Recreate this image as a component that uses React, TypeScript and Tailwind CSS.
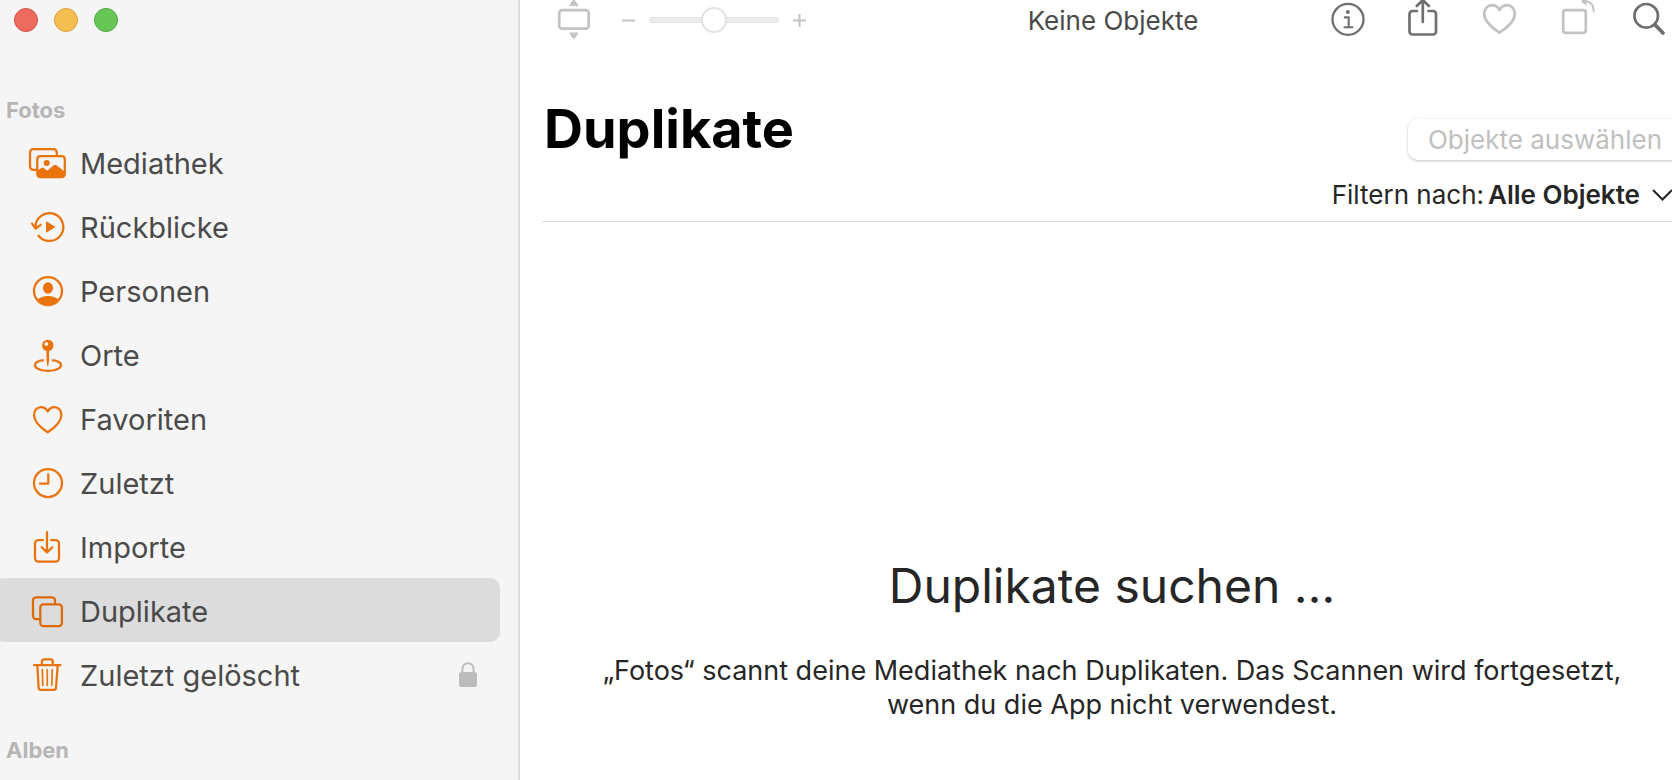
import type { ReactNode } from 'react';

type Item = { label: string; icon: ReactNode; active?: boolean; locked?: boolean };

function SideIcon({ children }: { children: ReactNode }) {
  return (
    <svg
      viewBox="0 0 40 40"
      className="size-10 shrink-0"
      fill="none"
      stroke="currentColor"
      strokeWidth="2.250"
      strokeLinecap="round"
      strokeLinejoin="round"
      aria-hidden="true"
    >
      {children}
    </svg>
  );
}

const items: Item[] = [
  {
    label: 'Mediathek',
    icon: (
      <SideIcon>
        <path d="M8 27.8H5.2A3.2 3.2 0 0 1 2 24.600V10.400A3.200 3.200 0 0 1 5.200 7.200H25.600A3.200 3.200 0 0 1 28.800 10.400V13" />
        <rect x="9.300" y="14" width="27.500" height="21" rx="3" />
        <circle cx="18.700" cy="21" r="3" fill="currentColor" stroke="none" />
        <path d="M9.300 28.700L13.500 25.900Q14.700 25.200 15.800 26.100L19 28.700L25.800 23.300Q27.200 22.300 28.500 23.300L36.800 29.700V32.500Q36.800 35 34 35H12Q9.300 35 9.300 32Z" fill="currentColor" stroke="none" />
      </SideIcon>
    ),
  },
  {
    label: 'Rückblicke',
    icon: (
      <SideIcon>
        <path d="M7.500 21.500A13.900 13.900 0 1 1 10.500 29.700" />
        <path d="M4 17.600L7.800 22.600L12.600 18.800" />
        <path d="M18 16.300Q18 15.200 19 15.800L26.800 20.400Q27.700 21 26.800 21.600L19 26.200Q18 26.800 18 25.700Z" fill="currentColor" stroke="none" />
      </SideIcon>
    ),
  },
  {
    label: 'Personen',
    icon: (
      <SideIcon>
        <circle cx="20" cy="21" r="14" />
        <ellipse cx="20" cy="18" rx="5.100" ry="5.700" fill="currentColor" stroke="none" />
        <path d="M9.600 30C11.500 27.600 15.500 26 20 26S28.500 27.600 30.400 30A14 14 0 0 1 9.600 30Z" fill="currentColor" stroke="none" />
      </SideIcon>
    ),
  },
  {
    label: 'Orte',
    icon: (
      <SideIcon>
        <path
          d="M19.800 5.700A5.700 5.700 0 1 0 19.800 17.100A5.700 5.700 0 1 0 19.800 5.700ZM18.300 8A1.900 1.900 0 1 1 18.300 11.800A1.900 1.900 0 1 1 18.300 8Z"
          fill="currentColor"
          fillRule="evenodd"
          stroke="none"
        />
        <path d="M18.500 16H21.100V26.500L20.200 32Q19.800 33 19.400 32L18.500 26.500Z" fill="currentColor" stroke="none" />
        <path d="M15.800 26.200C10.500 26.700 7 28.700 7 31.300C7 34.500 12.800 36.900 20 36.900S33 34.500 33 31.300C33 28.700 29 26.700 23.800 26.200" strokeLinecap="butt" />
      </SideIcon>
    ),
  },
  {
    label: 'Favoriten',
    icon: (
      <SideIcon>
        <path d="M19.700 34.200C13 29.800 6 23.600 6 16.900C6 12.300 9.100 9 13 9C15.900 9 18.200 10.500 19.700 13.400C21.200 10.500 23.500 9 26.400 9C30.300 9 33.400 12.300 33.400 16.900C33.400 23.600 26.400 29.800 19.700 34.200Z" />
      </SideIcon>
    ),
  },
  {
    label: 'Zuletzt',
    icon: (
      <SideIcon>
        <circle cx="20" cy="21" r="14" />
        <path d="M20.300 12.300V21.500H12" />
      </SideIcon>
    ),
  },
  {
    label: 'Importe',
    icon: (
      <SideIcon>
        <path d="M15 14H10.500A3.500 3.500 0 0 0 7 17.500V32.200A3.500 3.500 0 0 0 10.500 35.700H27.500A3.500 3.500 0 0 0 31 32.200V17.500A3.500 3.500 0 0 0 27.500 14H23" />
        <path d="M19 6V26M13.700 21.200L19 26.400L24.300 21.200" />
      </SideIcon>
    ),
  },
  {
    label: 'Duplikate',
    active: true,
    icon: (
      <SideIcon>
        <path d="M11 29H8A3 3 0 0 1 5 26V10.300A3 3 0 0 1 8 7.300H24A3 3 0 0 1 27 10.300V13" />
        <rect x="12.300" y="14.300" width="21.600" height="21.700" rx="3" />
      </SideIcon>
    ),
  },
  {
    label: 'Zuletzt gelöscht',
    locked: true,
    icon: (
      <SideIcon>
        <path d="M6 11H32.500M13.900 10.500V7.700A2.300 2.300 0 0 1 16.200 5.400H22.500A2.300 2.300 0 0 1 24.800 7.700V10.500" />
        <path d="M9.300 11.500L10.600 33.800A2.200 2.200 0 0 0 12.800 35.800H25.800A2.200 2.200 0 0 0 28 33.800L29.700 11.500" />
        <path d="M14.300 15.700L14.800 31.300M19.300 15.700V31.300M24.300 15.700L23.800 31.300" strokeWidth="1.700" />
      </SideIcon>
    ),
  },
];

function LockIcon() {
  return (
    <svg viewBox="0 0 18 25" className="h-[25px] w-[18px] shrink-0 text-[#bcbcbc]" fill="none" aria-hidden="true">
      <path d="M3.400 12V7.200C3.400 3.500 5.700 1.200 9 1.200S14.600 3.500 14.600 7.200V12" stroke="currentColor" strokeWidth="2" />
      <rect y="10" width="18" height="15" rx="2.500" fill="currentColor" />
    </svg>
  );
}

function ToolButton({ label, disabled, children }: { label: string; disabled?: boolean; children: ReactNode }) {
  return (
    <button
      type="button"
      aria-label={label}
      disabled={disabled}
      className="size-10 shrink-0 text-[#6f6f6f] disabled:text-[#c2c2c2]"
    >
      <svg
        viewBox="0 0 40 40"
        className="size-10"
        fill="none"
        stroke="currentColor"
        strokeWidth="2.700"
        strokeLinecap="round"
        strokeLinejoin="round"
        aria-hidden="true"
      >
        {children}
      </svg>
    </button>
  );
}

function Sidebar() {
  return (
    <aside className="w-[520px] shrink-0 border-r-2 border-[#dcdcdc] bg-[#f5f5f5]">
      <div className="flex h-10 items-center gap-4 pl-3.5">
        <button type="button" aria-label="Schließen" className="size-6 rounded-full border border-[#d65448] bg-[#ec6b5f]" />
        <button type="button" aria-label="Minimieren" className="size-6 rounded-full border border-[#d9a23c] bg-[#f4bf50]" />
        <button type="button" aria-label="Maximieren" className="size-6 rounded-full border border-[#50a73f] bg-[#67c655]" />
      </div>
      <h2 className="mt-[54px] pl-1.5 text-[22px] leading-8 font-bold text-[#b6b6b6]">Fotos</h2>
      <nav className="mt-1 -ml-1.5 pr-[18px]">
        <ul>
          {items.map((item) => (
            <li key={item.label}>
              <a
                href="#"
                aria-current={item.active ? 'page' : undefined}
                className={
                  item.active
                    ? 'flex h-16 items-center gap-3 rounded-[10px] bg-[#dcdcdc] pr-[23px] pl-[34px] text-[#dd6a06]'
                    : 'flex h-16 items-center gap-3 rounded-[10px] pr-[23px] pl-[34px] text-[#e9730c]'
                }
              >
                {item.icon}
                <span className="flex-1 pt-[3px] text-[29px] leading-9 text-[#4a4a4a]">{item.label}</span>
                {item.locked && <LockIcon />}
              </a>
            </li>
          ))}
        </ul>
      </nav>
      <h2 className="mt-7 pl-1.5 text-[22px] leading-8 font-bold text-[#b6b6b6]">Alben</h2>
    </aside>
  );
}

function Toolbar() {
  return (
    <div className="flex h-10 items-center pl-[34px]">
      <ToolButton label="Seitenverhältnis" disabled>
        <rect x="5.200" y="10.200" width="29.500" height="18.500" rx="3" />
        <path d="M16 5.300L19 .5Q19.800-.5 20.600.5L23.800 5.300ZM16 33.300L19 38Q19.800 39 20.600 38L23.800 33.300Z" fill="currentColor" strokeWidth="1" />
      </ToolButton>
      <div className="ml-7 flex items-center gap-3.5 text-[#c4c4c4]">
        <svg viewBox="0 0 13 13" className="size-[13px]" stroke="currentColor" strokeWidth="2" aria-hidden="true">
          <path d="M0 6.500H13" />
        </svg>
        <input
          type="range"
          aria-label="Zoom"
          defaultValue={50}
          className="h-[26px] w-[130px] appearance-none bg-transparent [&::-webkit-slider-runnable-track]:h-1.5 [&::-webkit-slider-runnable-track]:rounded-full [&::-webkit-slider-runnable-track]:border [&::-webkit-slider-runnable-track]:border-[#e2e2e2] [&::-webkit-slider-runnable-track]:bg-[#ececec] [&::-webkit-slider-thumb]:-mt-[11px] [&::-webkit-slider-thumb]:size-[26px] [&::-webkit-slider-thumb]:appearance-none [&::-webkit-slider-thumb]:rounded-full [&::-webkit-slider-thumb]:border-2 [&::-webkit-slider-thumb]:border-[#e2e2e2] [&::-webkit-slider-thumb]:bg-white"
        />
        <svg viewBox="0 0 13 13" className="size-[13px]" stroke="currentColor" strokeWidth="2" aria-hidden="true">
          <path d="M0 6.500H13M6.500 0V13" />
        </svg>
      </div>
      <p className="flex-1 pt-0.5 pl-[92px] text-center text-[26px] leading-8 text-[#4a4a4a]">Keine Objekte</p>
      <div className="flex items-center gap-9">
        <ToolButton label="Informationen">
          <circle cx="20" cy="19.300" r="15.500" strokeWidth="2.300" />
          <circle cx="19.800" cy="11.900" r="2" fill="currentColor" stroke="none" />
          <path d="M16.800 17.400H20.700V26.700M16.500 27.200H24.500" strokeWidth="2.100" />
        </ToolButton>
        <ToolButton label="Teilen">
          <path d="M13 11H8.500A3 3 0 0 0 5.500 14V31.500A3 3 0 0 0 8.500 34.500H29A3 3 0 0 0 32 31.500V14A3 3 0 0 0 29 11H24.500" />
          <path d="M18.800 22V.5M12.800 6L18.800 0L24.800 6" />
        </ToolButton>
        <ToolButton label="Favorit" disabled>
          <path d="M19.500 32.600C12 27.800 4.200 21 4.200 13.800C4.200 8.700 7.600 5.200 12 5.200C15.200 5.200 17.800 6.900 19.500 10C21.200 6.900 23.800 5.200 27 5.200C31.400 5.200 34.800 8.700 34.800 13.800C34.800 21 27 27.800 19.500 32.600Z" />
        </ToolButton>
        <ToolButton label="Drehen" disabled>
          <rect x="7.200" y="10.200" width="22.600" height="22.600" rx="2.500" />
          <path d="M27 1.300H30.500Q37.300 2.500 37.800 11.500" strokeWidth="1.900" />
          <path d="M24.800 1.300L30.500-3V6Z" fill="currentColor" stroke="none" />
        </ToolButton>
        <ToolButton label="Suchen">
          <circle cx="14.200" cy="15.800" r="11.800" />
          <path d="M22.900 24.700L31 33" strokeWidth="3.800" />
        </ToolButton>
      </div>
    </div>
  );
}

export default function App() {
  return (
    <div className="flex min-h-screen overflow-hidden bg-white font-['Inter','Liberation_Sans',sans-serif]">
      <Sidebar />
      <main className="min-w-0 flex-1">
        <Toolbar />
        <header className="ml-[22px] border-b border-[#dedede]">
          <div className="flex h-[137px] items-center justify-between pt-10">
            <h1 className="pl-0.5 text-[54px] leading-16 font-bold text-black">Duplikate</h1>
            <button
              type="button"
              disabled
              className="mt-[22px] -mr-2.5 h-[41px] rounded-[10px] bg-white px-5 text-[26px] leading-8 text-[#c0c0c0] shadow-[0_1px_3px_rgba(0,0,0,0.25)]"
            >
              Objekte auswählen
            </button>
          </div>
          <div className="flex h-11 items-center justify-end pb-2 text-[26px] leading-8 text-[#262626]">
            <label htmlFor="filter">Filtern nach:</label>
            <select id="filter" className="ml-1 appearance-none bg-transparent font-semibold">
              <option>Alle Objekte</option>
            </select>
            <svg viewBox="0 0 20 12" className="ml-3 h-3 w-5" fill="none" stroke="currentColor" strokeWidth="2" aria-hidden="true">
              <path d="M1 1L10.500 10.500L20 1" />
            </svg>
          </div>
        </header>
        <section className="flex flex-col items-center pt-[332px] pl-8 text-center text-[#262626]">
          <h2 className="text-[48px] leading-16">Duplikate suchen …</h2>
          <p className="mt-9 max-w-[1080px] text-[27px] leading-[34px]">
            „Fotos“ scannt deine Mediathek nach Duplikaten. Das Scannen wird fortgesetzt, wenn du die App nicht verwendest.
          </p>
        </section>
      </main>
    </div>
  );
}
